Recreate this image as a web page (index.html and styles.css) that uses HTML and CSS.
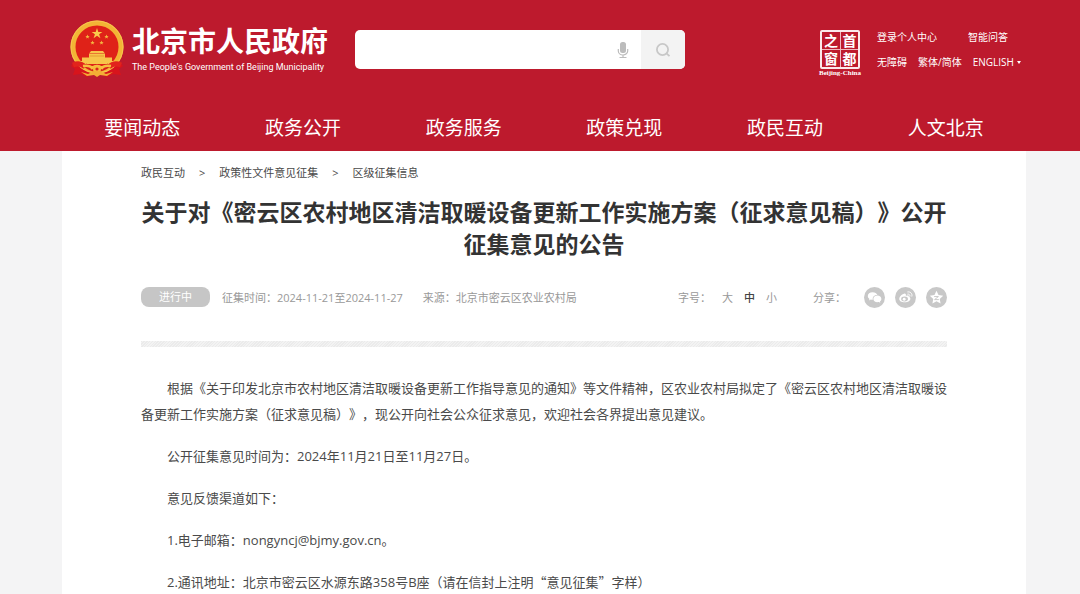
FILE: index.html
```html
<!DOCTYPE html>
<html lang="zh-CN">
<head>
<meta charset="utf-8">
<meta name="viewport" content="width=device-width, initial-scale=1">
<title>北京市人民政府</title>
<link rel="stylesheet" href="styles.css">
</head>
<body>
<header class="site-header">
  <div class="shell masthead">
    <a class="brand" href="#">
      <svg class="emblem" viewBox="0 0 54 58" aria-hidden="true">
        <path d="M5 41 L1 46 L5 49 L3 55 L11 54 L17 57 L22 54 L32 54 L37 57 L43 54 L51 55 L49 49 L53 46 L49 41Z" fill="#d8141c"/>
        <circle cx="27" cy="27" r="24" fill="#df2218" stroke="#f3b535" stroke-width="5"/>
        <circle cx="27" cy="27" r="26" fill="none" stroke="#f7c650" stroke-width="1"/>
        <path d="M27 8 L28.3 11.9 H32.4 L29.1 14.3 L30.4 18.2 L27 15.8 L23.6 18.2 L24.9 14.3 L21.6 11.9 H25.7Z" fill="#f9cc4c"/>
        <g fill="#f4b640">
          <path id="star" d="M17.5 14.500 l.6 1.500 h1.600 l-1.300 1 .5 1.600 -1.400-.9 -1.400 .9 .5-1.600 -1.300-1 h1.600z"/>
          <use href="#star" x="19"/><use href="#star" x="5" y="6"/><use href="#star" x="14" y="6"/>
        </g>
        <path d="M21 31h12l1.500 2h-15zM19 33.500h16v4H19zM12 37.500h30v3.500H12zM9 41h36v3H9z" fill="#f7c54a"/>
        <path d="M20 36h14" stroke="#d9801f" stroke-width="0.600"/>
        <path d="M3 45q7-3 12 2M51 45q-7-3-12 2" fill="none" stroke="#e2231c" stroke-width="5"/>
        <path d="M15 45q6 5 12 5t12-5" fill="none" stroke="#d8201a" stroke-width="4"/>
        <path d="M13 46q7-1 9 2q5-4 10 0q2-3 9-2" fill="none" stroke="#f7bf3e" stroke-width="2.500"/>
        <circle cx="27" cy="49" r="4" fill="#f6bb3b"/><circle cx="27" cy="49" r="1.600" fill="#d8281c"/>
        <path d="M11 52l7 2 6-3h6l6 3 7-2-6 4-7-1-3 2-3-2-7 1z" fill="#f4ad35"/>
      </svg>
      <span class="brand-text">
        <span class="brand-name">北京市人民政府</span>
        <span class="brand-en">The People's Government of Beijing Municipality</span>
      </span>
    </a>
    <form class="search" role="search">
      <input class="search-input" type="text" aria-label="搜索">
      <button class="search-voice" type="button" aria-label="语音搜索">
        <svg width="12" height="18" viewBox="0 0 12 18" aria-hidden="true"><rect x="3" y="1" width="6" height="11" rx="2.500" fill="#bcbcbc"/><path d="M1.300 8v2a4.700 4 0 0 0 9.400 0V8M6 14V16M2.500 16.500h7" fill="none" stroke="#bcbcbc" stroke-width="1.200"/></svg>
      </button>
      <button class="search-go" type="submit" aria-label="搜索">
        <svg width="16" height="16" viewBox="0 0 16 16" aria-hidden="true" fill="none" stroke="#c8c8c8" stroke-width="1.800"><circle cx="7.500" cy="7.500" r="5.600"/><path d="M11.200 11.200L14.500 14.200"/></svg>
      </button>
    </form>
    <a class="seal" href="#">
      <span class="seal-box"><span>首</span><span>都</span><span>之</span><span>窗</span></span>
      <span class="seal-en">Beijing-China</span>
    </a>
    <div class="tools">
      <div class="tools-row tools-row-wide"><a href="#">登录个人中心</a><a href="#">智能问答</a></div>
      <div class="tools-row"><a href="#">无障碍</a><a href="#">繁体/简体</a><a class="lang" href="#">ENGLISH<span class="caret"></span></a></div>
    </div>
  </div>
  <nav class="shell main-nav">
    <a href="#">要闻动态</a><a href="#">政务公开</a><a href="#">政务服务</a><a href="#">政策兑现</a><a href="#">政民互动</a><a href="#">人文北京</a>
  </nav>
</header>
<main class="shell article">
  <nav class="crumbs" aria-label="当前位置">
    <a href="#">政民互动</a><span>&gt;</span><a href="#">政策性文件意见征集</a><span>&gt;</span><a href="#">区级征集信息</a>
  </nav>
  <h1 class="title">关于对《密云区农村地区清洁取暖设备更新工作实施方案（征求意见稿）》公开征集意见的公告</h1>
  <div class="meta">
    <span class="status">进行中</span>
    <div class="facts"><span>征集时间：2024-11-21至2024-11-27</span><span>来源：北京市密云区农业农村局</span></div>
    <div class="sizes"><span>字号：</span><button type="button">大</button><button class="current" type="button">中</button><button type="button">小</button></div>
    <div class="share">
      <span>分享：</span>
      <a href="#" aria-label="微信"><svg viewBox="0 0 22 22"><circle cx="11" cy="11" r="11"/><g fill="#fff"><path d="M9 5.500c-3 0-5 1.800-5 4 0 1.300.7 2.300 1.700 3l-.5 1.600 2-1a7 7 0 0 0 2 .3c-.5-3 1.500-5 4.800-5C13.500 6.700 11.500 5.500 9 5.500z"/><path d="M14 9c2.400 0 4.200 1.500 4.200 3.500 0 1-.6 2-1.500 2.600l.4 1.500-1.700-.9c-3 .7-5.600-.9-5.600-3.200C9.800 10.500 11.600 9 14 9z"/></g></svg></a>
      <a href="#" aria-label="微博"><svg viewBox="0 0 22 22"><circle cx="11" cy="11" r="11"/><path d="M9.500 7c-2.500.6-5 3.300-5 5.500 0 2 2.500 3.500 5.600 3.500 3.600 0 6-2 6-3.800 0-1-.8-1.700-1.700-1.900.4-1.300-.8-1.800-3-1C11.700 7.500 11 6.700 9.500 7z" fill="#fff"/><ellipse cx="10" cy="12.500" rx="3.600" ry="2.600"/><circle cx="9.600" cy="12.800" r="1.500" fill="#fff"/><path d="M13 7.500c1.600-.4 3 .8 2.500 2.500M13 5.200c3-.6 5.500 1.800 4.600 4.800" fill="none" stroke="#fff" stroke-width="1"/></svg></a>
      <a href="#" aria-label="QQ空间"><svg viewBox="0 0 22 22"><circle cx="11" cy="11" r="11"/><path d="M11 4l2.100 4.500 4.900.6-3.600 3.400.9 4.900-4.300-2.400-4.300 2.400.9-4.900L4 9.100l4.900-.6z" fill="#fff"/><path d="M8.500 10h4.500l-4 3.200h4.500" fill="none" stroke="#c8c8c8" stroke-width="1"/></svg></a>
    </div>
  </div>
  <div class="rule"></div>
  <div class="body-text">
    <p>根据《关于印发北京市农村地区清洁取暖设备更新工作指导意见的通知》等文件精神，区农业农村局拟定了《密云区农村地区清洁取暖设备更新工作实施方案（征求意见稿）》，现公开向社会公众征求意见，欢迎社会各界提出意见建议。</p>
    <p>公开征集意见时间为：2024年11月21日至11月27日。</p>
    <p>意见反馈渠道如下：</p>
    <p>1.电子邮箱：nongyncj@bjmy.gov.cn。</p>
    <p>2.通讯地址：北京市密云区水源东路358号B座（请在信封上注明<span class="quoted">“意见征集”</span>字样）</p>
  </div>
</main>
</body>
</html>
```

FILE: styles.css
```css
* { box-sizing: border-box; }
html { background: #f4f4f5; }
body {
  margin: 0;
  min-height: 100vh;
  display: flex;
  flex-direction: column;
  font-family: "Open Sans", "Noto Sans CJK SC", sans-serif;
  font-size: 11px;
  color: #4a4a4a;
  text-spacing-trim: space-all;
}
a { color: inherit; text-decoration: none; }
button { border: 0; padding: 0; background: none; font: inherit; color: inherit; cursor: pointer; }
svg { display: block; }
.shell { margin: 0 54px 0 62px; }

.site-header { background: #bd1a2d; color: #fff; }
.masthead { display: flex; align-items: flex-start; height: 104px; padding: 20px 5px 0 8px; }
.brand { display: flex; gap: 8px; flex: none; width: 285px; }
.emblem { width: 54px; height: 58px; }
.brand-text { display: flex; flex-direction: column; padding-top: 4px; white-space: nowrap; }
.brand-name { font-size: 28px; font-weight: 700; line-height: 34px; }
.brand-en { font-family: Roboto, sans-serif; font-size: 9px; line-height: 18px; }

.search { display: flex; flex: 0 1 330px; height: 39px; margin-top: 10px; border-radius: 5px; overflow: hidden; background: #fff; }
.search-input { flex: 1; min-width: 0; border: 0; padding: 0 12px; background: none; font: inherit; font-size: 13px; outline: 0; }
.search-voice { display: grid; place-items: center; width: 36px; }
.search-go { display: grid; place-items: center; width: 44px; background: #f3f3f3; }

.seal { display: flex; flex-direction: column; align-items: center; margin-left: auto; margin-top: 10px; width: 44px; }
.seal-box { display: grid; grid-template: 1fr 1fr / 1fr 1fr; grid-auto-flow: column; direction: rtl; width: 40px; height: 39px; border: 2px solid #fbe9eb; border-radius: 2px; font-size: 14px; font-weight: 700; line-height: 17px; text-align: center; }
.seal-box span:nth-child(odd) { border-bottom: 1px solid #f0b8be; }
.seal-box span:nth-child(-n+2) { border-left: 1px solid #f0b8be; }
.seal-en { font-family: "Liberation Serif", serif; font-size: 7px; font-weight: 700; line-height: 9px; }

.tools { display: flex; flex-direction: column; gap: 9px; width: 144px; margin-left: 15px; padding-top: 9px; font-size: 10px; line-height: 16px; white-space: nowrap; }
.tools-row { display: flex; gap: 11px; }
.tools-row-wide { gap: 31px; }
.lang { display: flex; align-items: center; gap: 3px; }
.caret { border: 2px solid transparent; border-top: 3px solid #fff; border-bottom: 0; }

.main-nav { display: grid; grid-template-columns: repeat(6, 1fr); height: 47px; font-size: 19px; line-height: 48px; text-align: center; }

.article { flex: 1; padding: 12px 79px 0; background: #fff; }
.crumbs { display: flex; gap: 14px; line-height: 20px; }
.title { margin: 13px 0 0; font-size: 23px; font-weight: 700; line-height: 32px; text-align: center; color: #333; }
.meta { display: flex; align-items: center; gap: 12px; margin-top: 26px; height: 22px; color: #999; white-space: nowrap; }
.status { width: 69px; border-radius: 8px; background: #c6c6c6; color: #fff; line-height: 20px; text-align: center; }
.facts { display: flex; gap: 20px; }
.sizes { display: flex; gap: 11px; margin-left: auto; }
.sizes .current { color: #444; font-weight: 500; }
.share { display: flex; align-items: center; gap: 10px; margin-left: 24px; }
.share span { margin-right: 8px; }
.share svg { width: 21px; height: 21px; fill: #c8c8c8; }
.rule { height: 6px; margin-top: 33px; background: repeating-linear-gradient(135deg, #ebebeb 0 1px, #f3f3f3 1px 2px); }
.body-text { padding-top: 28px; font-size: 13px; line-height: 26px; }
.body-text p { margin: 0 0 16px; text-indent: 2em; }
.body-text p:last-child { margin-bottom: 0; }
.quoted { font-family: "Noto Sans CJK SC", sans-serif; }
```
